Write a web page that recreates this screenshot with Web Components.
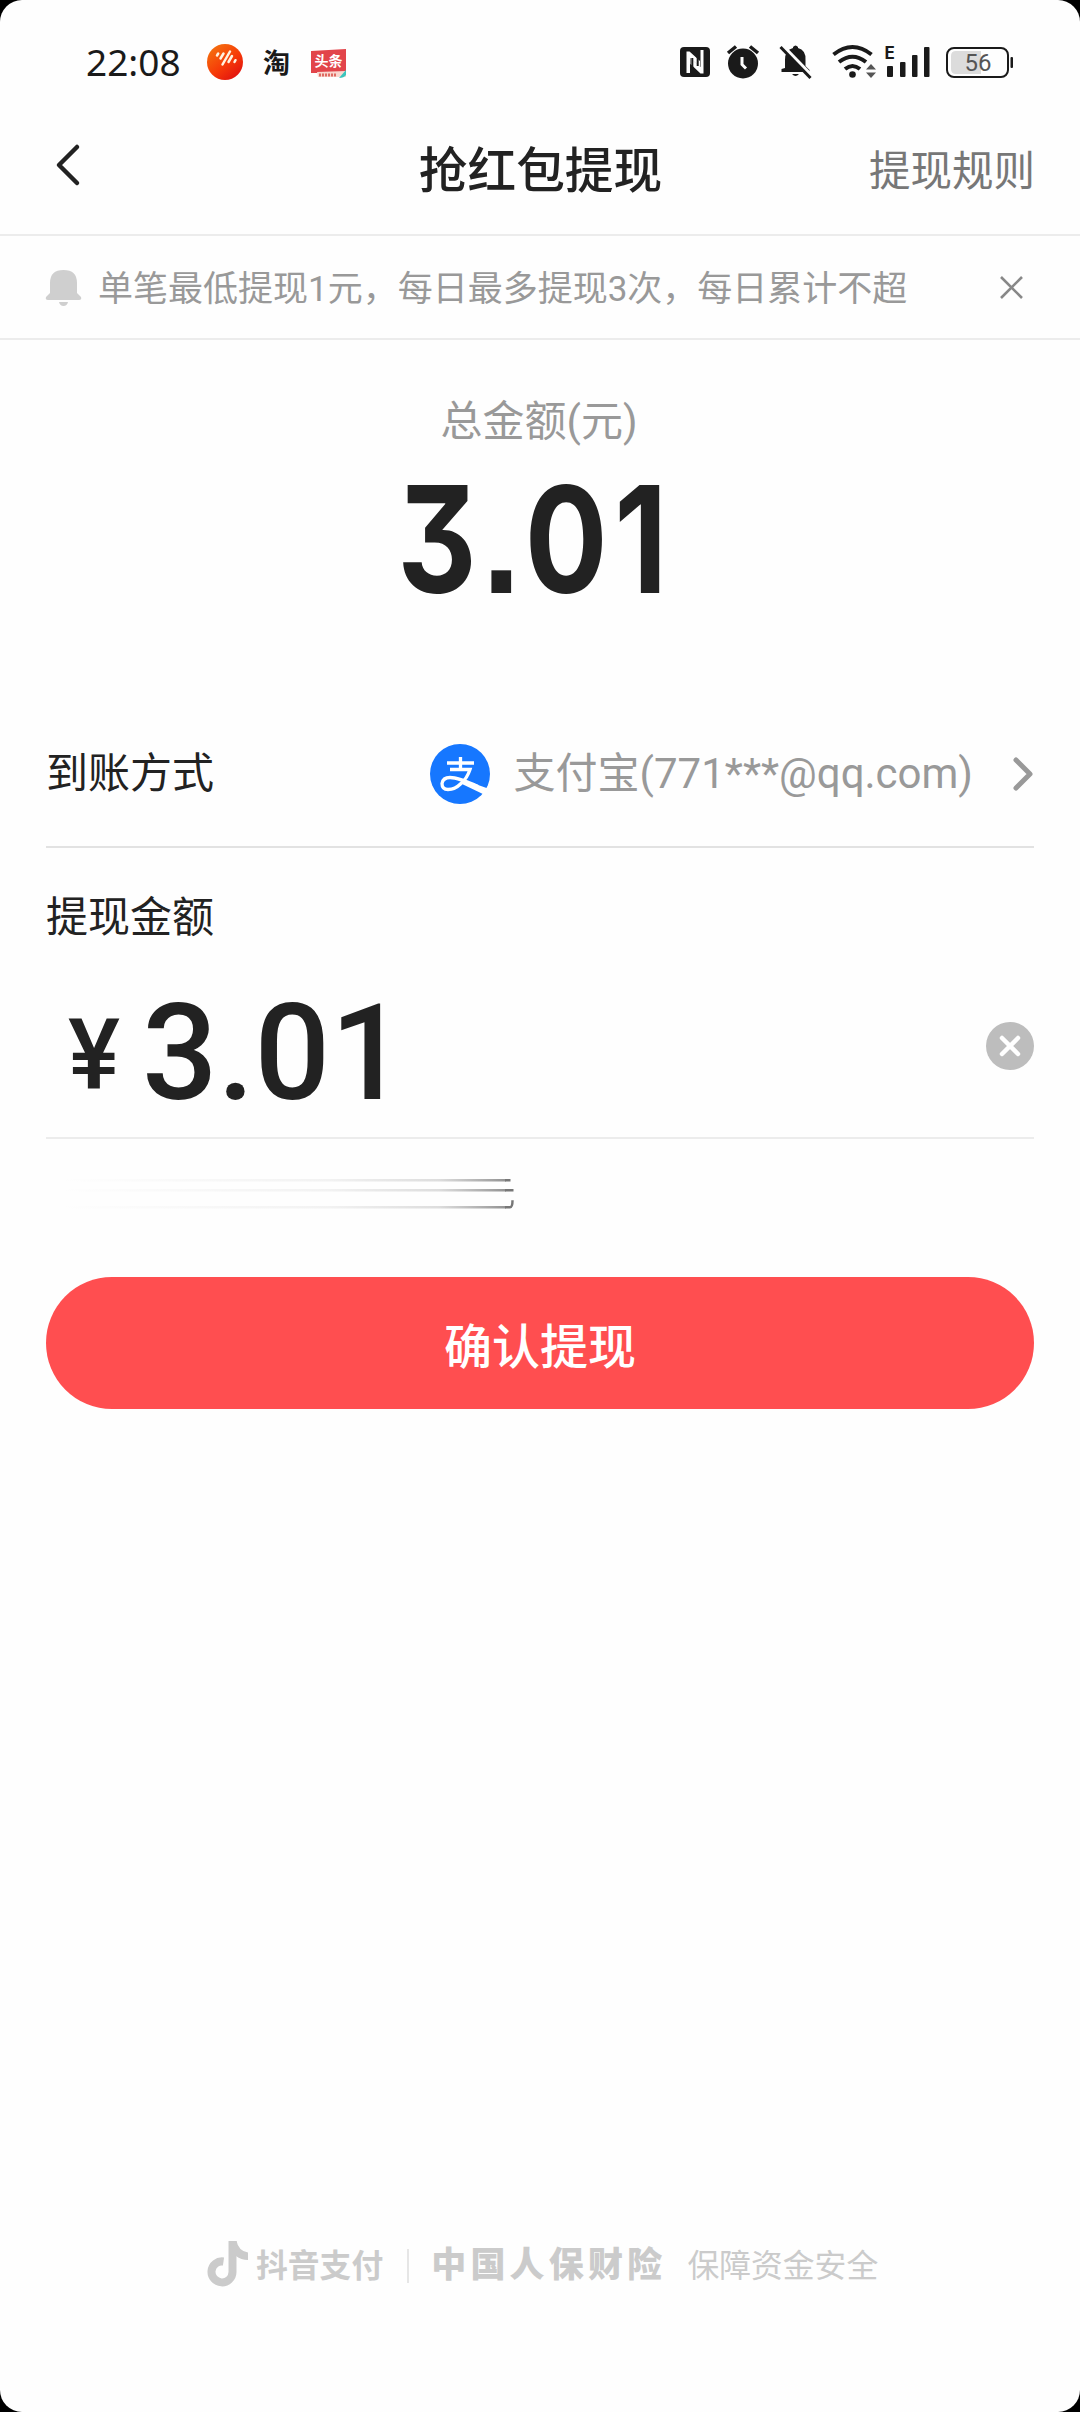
<!DOCTYPE html>
<html lang="zh-CN">
<head>
<meta charset="utf-8">
<title>抢红包提现</title>
<style>
    body {
        margin: 0;
        background: #000;
        font-family: Roboto, 'Noto Sans CJK SC', sans-serif;
        color: #222;
    }
</style>
</head>
<body>
<withdraw-page>
    <status-bar slot="top" time="22:08" battery="56"></status-bar>
    <nav-bar slot="top">抢红包提现<span slot="action">提现规则</span></nav-bar>
    <notice-bar slot="top">单笔最低提现1元，每日最多提现3次，每日累计不超</notice-bar>
    <total-amount label="总金额(元)">3.01</total-amount>
    <pay-method label="到账方式">支付宝(771***@qq.com)</pay-method>
    <amount-input label="提现金额">3.01</amount-input>
    <fading-lines></fading-lines>
    <confirm-button>确认提现</confirm-button>
    <safe-footer slot="bottom"></safe-footer>
</withdraw-page>

<script>
class BaseElement extends HTMLElement {
    constructor() {
        super();
        this.attachShadow({ mode: 'open' });
        const template = document.createElement('template');
        template.innerHTML = `<style>:host, * { box-sizing: border-box; } svg { display: block; flex: none; }</style>` + this.render();
        this.shadowRoot.appendChild(template.content.cloneNode(true));
    }

    attr(name) {
        return this.getAttribute(name) || '';
    }
}

customElements.define('withdraw-page', class extends BaseElement {
    render() {
        return `
        <style>
            :host {
                display: flex;
                flex-direction: column;
                height: 2412px;
                background: #fefefe;
                border-radius: 22px;
                overflow: hidden;
            }
            main { flex: 1; padding: 0 46px; }
        </style>
        <slot name="top"></slot>
        <main><slot></slot></main>
        <slot name="bottom"></slot>`;
    }
});

customElements.define('status-bar', class extends BaseElement {
    render() {
        return `
        <style>
            :host {
                display: flex;
                align-items: center;
                justify-content: space-between;
                height: 124px;
                padding: 0 66px 0 86px;
                color: #1a1a1a;
            }
            .side { display: flex; align-items: center; }
            .time { font: 37px/44px 'Noto Sans', sans-serif; letter-spacing: 0; width: 121px; white-space: nowrap; }
            .tao { font: 700 27px/36px 'Noto Sans CJK SC', sans-serif; margin-left: 20px; }
            .news { margin: 4px 0 0 20px; }
        </style>
        <div class="side">
            <span class="time">${this.attr('time')}</span>
            <svg width="36" height="36" viewBox="0 0 36 36">
                <defs><linearGradient id="g" x1="0" y1="0" x2=".8" y2="1"><stop offset="0" stop-color="#f47c10"/><stop offset=".6" stop-color="#f63a08"/><stop offset="1" stop-color="#e01010"/></linearGradient></defs>
                <circle cx="18" cy="18" r="18" fill="url(#g)"/>
                <path d="M10 11.500l1.200-2M13.500 14.500l3-5M15.500 20.500l7.500-13M21.500 18l3.500-6M27.500 18l1-1.800" stroke="#fff3e0" stroke-width="2.500" stroke-linecap="round"/>
            </svg>
            <span class="tao">淘</span>
            <svg class="news" width="37" height="30" viewBox="0 0 37 30">
                <path d="M1 2L36 0v24l-35 0z" fill="#e2444a"/>
                <path d="M7 23l29-1v6H8z" fill="#f9d7cf"/>
                <path d="M29 29l7-8v5q-2 3-7 3z" fill="#39c5bd"/>
                <text x="4.500" y="17" font-size="14" font-weight="700" fill="#fff" font-family="Noto Sans CJK SC">头条</text>
                <path d="M9 26h18" stroke="#df6a62" stroke-width="3" stroke-dasharray="2 1"/>
            </svg>
        </div>
        <div class="side">
            <svg width="334" height="36" viewBox="680 44 334 36" fill="#1a1a1a">
                <rect x="680" y="47" width="30" height="30" rx="4"/>
                <path d="M686.500 73V51.500h3L700 61v5.500L690 58v15zM703.500 50v23.500h-3L690.500 64v-5.500L700.500 67V50z" fill="#fefefe"/>
                <path d="M692.300 58v11M697.700 55v11" stroke="#1a1a1a" stroke-width="2"/>
                <circle cx="743" cy="63.500" r="15"/>
                <path d="M728 53l8-6.500M750 46.500l8 6.500" stroke="#1a1a1a" stroke-width="3.500"/>
                <path d="M742 57v7.500l4 4" fill="none" stroke="#fefefe" stroke-width="3"/>
                <path d="M785 68V60q0-10 8-12v-1q2.500-3 5 0v1q8 2 7.500 12v6l4 4v2h-28v-3z"/>
                <path d="M792 74h7q-3.500 4-7 0z"/>
                <path d="M783 46l30 31" stroke="#fefefe" stroke-width="3.500"/>
                <path d="M780.500 47l30 31" stroke="#1a1a1a" stroke-width="3"/>
                <g fill="none" stroke="#1a1a1a" stroke-width="4">
                    <path d="M833.500 54.500q19-15 38 0M839 62q13.500-10.500 27 0M845 69q7.500-6 15 0"/>
                </g>
                <circle cx="852.500" cy="74.500" r="3.300"/>
                <path d="M866 69.500l5-5.500 5 5.500zM866 72.500h10l-5 5.500z" fill="#555"/>
                <text x="884.500" y="58.500" font-size="17" font-weight="700" font-family="Inter">E</text>
                <rect x="887" y="66" width="6" height="11" rx="1"/>
                <rect x="900" y="62" width="5.500" height="15" rx="1"/>
                <rect x="912" y="55" width="5.500" height="22" rx="1"/>
                <rect x="924" y="47" width="5.500" height="30" rx="1"/>
                <rect x="947" y="48" width="61" height="29" rx="7" fill="none" stroke="#1a1a1a" stroke-width="2"/>
                <path d="M956 51h25v23h-25q-5 0-5-5v-13q0-5 5-5z" fill="#dcdcdc"/>
                <rect x="1010.500" y="57" width="2.500" height="11" rx="1"/>
                <text x="964.500" y="71" font-size="24" fill="#555" font-family="Roboto">${this.attr('battery')}</text>
            </svg>
        </div>`;
    }
});

customElements.define('nav-bar', class extends BaseElement {
    render() {
        return `
        <style>
            :host {
                display: grid;
                grid-template-columns: 1fr auto 1fr;
                align-items: center;
                height: 112px;
                padding: 0 45px 0 46px;
                border-bottom: 2px solid #ececec;
            }
            h1 { margin: 0; font-size: 48.700px; line-height: 70px; font-weight: 500; padding-bottom: 14px; }
            .action { justify-self: end; font-size: 41.500px; line-height: 60px; color: #777; padding-bottom: 14px; }
            svg { margin: 0 0 29px 8px; }
        </style>
        <svg width="28" height="44" viewBox="0 0 28 44"><path d="M23 4L5 22l18 18" fill="none" stroke="#222" stroke-width="4.500" stroke-linecap="round" stroke-linejoin="round"/></svg>
        <h1><slot></slot></h1>
        <div class="action"><slot name="action"></slot></div>`;
    }
});

customElements.define('notice-bar', class extends BaseElement {
    render() {
        return `
        <style>
            :host {
                display: flex;
                align-items: center;
                height: 104px;
                padding: 0 56px 0 45px;
                border-bottom: 2px solid #ececec;
            }
            .text { flex: 1; margin-left: 16px; padding-top: 5px; font-size: 35px; line-height: 50px; color: #999; white-space: nowrap; }
        </style>
        <svg width="37" height="37" viewBox="0 0 37 37" fill="#cfcfcf">
            <path d="M5 24V14Q5 1 18.500 1T32 14v10l4 4q1 3-2 3H3q-3 0-2-3z"/>
            <path d="M14 33h9q-1 4-4.500 4T14 33z"/>
        </svg>
        <span class="text"><slot></slot></span>
        <svg width="25" height="25" viewBox="0 0 25 25"><path d="M2 2l21 21M23 2L2 23" stroke="#888" stroke-width="2.600"/></svg>`;
    }
});

customElements.define('total-amount', class extends BaseElement {
    render() {
        return `
        <style>
            :host { display: flex; flex-direction: column; align-items: center; height: 370px; padding-top: 52px; }
            .label { font-size: 42px; line-height: 60px; color: #999; padding-right: 2px; }
            .value {
                font: 740 148px/170px Inter, sans-serif;
                font-feature-settings: 'cv09', 'ss07';
                letter-spacing: 8px;
                transform: scaleX(.83);
                margin: 3px 8px 0 0;
            }
        </style>
        <div class="label">${this.attr('label')}</div>
        <div class="value"><slot></slot></div>`;
    }
});

customElements.define('pay-method', class extends BaseElement {
    render() {
        return `
        <style>
            :host {
                display: flex;
                align-items: center;
                height: 138px;
                padding-bottom: 8px;
                border-bottom: 2px solid #e2e2e2;
                font-size: 42px;
                line-height: 60px;
            }
            .label { flex: 1; }
            .account { color: #999; margin: 0 39px 0 24px; }
        </style>
        <span class="label">${this.attr('label')}</span>
        <svg width="60" height="60" viewBox="0 0 60 60">
            <circle cx="30" cy="30" r="30" fill="#1677ff"/>
            <path d="M17 19h27M30.500 13v12M20 25.500h20q-3 9-9 14-6 6-13 6-6 0-6-6 1-6 8-6 8 0 28 9" fill="none" stroke="#fff" stroke-width="3.300"/>
            <path d="M34 36l24 8.500-3 6.500-23-11z" fill="#fff"/>
        </svg>
        <span class="account"><slot></slot></span>
        <svg width="22" height="36" viewBox="0 0 22 36"><path d="M4 4l14 14L4 32" fill="none" stroke="#999" stroke-width="5" stroke-linecap="round" stroke-linejoin="round"/></svg>`;
    }
});

customElements.define('amount-input', class extends BaseElement {
    render() {
        return `
        <style>
            :host { display: block; height: 291px; border-bottom: 2px solid #ececec; padding-top: 40px; }
            .label { font-size: 42px; line-height: 60px; }
            .row { display: flex; align-items: center; height: 196px; padding-left: 22px; font-weight: 500; }
            .yen { font-size: 98px; line-height: 120px; width: 74px; padding-top: 17px; }
            .value { flex: 1; font-size: 133px; line-height: 160px; padding-top: 16px; }
        </style>
        <div class="label">${this.attr('label')}</div>
        <div class="row">
            <span class="yen">¥</span>
            <span class="value"><slot></slot></span>
            <svg width="48" height="48" viewBox="0 0 48 48"><circle cx="24" cy="24" r="24" fill="#bdbdbd"/><path d="M16 16l16 16M32 16L16 32" stroke="#fff" stroke-width="4.500" stroke-linecap="round"/></svg>
        </div>`;
    }
});

// three strokes that fade out towards the left
customElements.define('fading-lines', class extends BaseElement {
    render() {
        return `
        <style>:host { display: block; height: 138px; padding-top: 36px; }</style>
        <svg width="470" height="36" viewBox="46 1175 470 36">
            <defs><linearGradient id="f" gradientUnits="userSpaceOnUse" x1="60" y1="0" x2="506" y2="0"><stop offset="0" stop-color="#888" stop-opacity="0"/><stop offset=".6" stop-color="#888" stop-opacity=".1"/><stop offset=".85" stop-color="#888" stop-opacity=".28"/><stop offset="1" stop-color="#777" stop-opacity=".8"/></linearGradient></defs>
            <g fill="url(#f)">
                <rect x="60" y="1179" width="446" height="2.500"/>
                <rect x="60" y="1189" width="446" height="2.500"/>
                <rect x="60" y="1206" width="446" height="2.500"/>
            </g>
            <path d="M505 1180.300h5.500M505 1190.300h8.500M505 1207.300h5q2.500 0 2.500-7" fill="none" stroke="#777" stroke-width="2.500"/>
        </svg>`;
    }
});

customElements.define('confirm-button', class extends BaseElement {
    render() {
        return `
        <style>
            :host { display: block; }
            button {
                display: block;
                width: 100%;
                height: 132px;
                padding: 0 0 1px;
                border: 0;
                border-radius: 66px;
                background: #ff4e50;
                color: #fff;
                font: inherit;
                font-size: 48px;
                font-weight: 500;
            }
        </style>
        <button><slot></slot></button>`;
    }
});

customElements.define('safe-footer', class extends BaseElement {
    render() {
        return `
        <style>
            :host {
                display: flex;
                align-items: center;
                height: 196px;
                padding: 0 0 100px 207px;
                color: #cbcbcb;
                font-size: 31.800px;
                line-height: 46px;
                white-space: nowrap;
            }
            .brand { font-weight: 700; margin-left: 8px; padding-top: 3px; }
            .line { width: 2px; height: 34px; background: #e6e6e6; margin: 4px 22px 0 24px; }
            .insurer { font-size: 35px; font-weight: 900; letter-spacing: 4.200px; padding-top: 4px; }
            .promise { margin-left: 21px; padding-top: 3px; }
        </style>
        <svg width="41" height="46" viewBox="0 0 41 46"><path d="M25.500 0v31a10.500 10.500 0 1 1-9-10.500" fill="none" stroke="#cbcbcb" stroke-width="8"/><path d="M25 0h4.500q2 10 11.500 11.500v7.500q-7 0-12-4z" fill="#cbcbcb"/></svg>
        <span class="brand">抖音支付</span>
        <span class="line"></span>
        <span class="insurer">中国人保财险</span>
        <span class="promise">保障资金安全</span>`;
    }
});
</script>
</body>
</html>
